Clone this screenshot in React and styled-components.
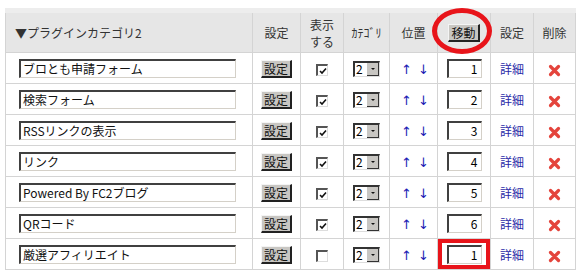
import React from "react";
import styled, { createGlobalStyle } from "styled-components";

const Global = createGlobalStyle`
  body {
    margin: 0;
    background: #fff;
    font-family: "Noto Sans CJK JP", "Liberation Sans", sans-serif;
    font-size: 12px;
    color: #222;
  }
`;

const Wrapper = styled.div`
  padding: 8px 0 0 5px;
`;

const Table = styled.table`
  border-collapse: collapse;
  table-layout: fixed;
  width: 570px;
  border-top: 5px solid #ededed;
`;

const Head = styled.th`
  position: relative;
  background-color: #e6e6e6;
  border: 1px solid #d4d4d4;
  height: 39px;
  padding: 0;
  font-weight: normal;
  font-size: 12px;
  line-height: 17px;
  color: #333;
  text-align: ${(p) => (p.$left ? "left" : "center")};
  padding-left: ${(p) => (p.$left ? "9px" : "0")};
`;

const Cell = styled.td`
  position: relative;
  border: 1px solid #d4d4d4;
  height: 30px;
  padding: 0;
  text-align: ${(p) => (p.$left ? "left" : "center")};
  padding-left: ${(p) => (p.$left ? "13px" : "0")};
`;

const TextBox = styled.div`
  box-sizing: border-box;
  width: 217px;
  height: 19px;
  border-top: 2px solid #404040;
  border-left: 2px solid #404040;
  border-right: 1px solid #d4d0c8;
  border-bottom: 1px solid #d4d0c8;
  background: #fff;
  padding-left: 2px;
  font-size: 12px;
  line-height: 16px;
  color: #111;
  white-space: nowrap;
  overflow: hidden;
`;

const Button = styled.span`
  display: inline-block;
  box-sizing: border-box;
  height: 18px;
  padding: 0 2px;
  background: #c8c6c2;
  border-top: 1px solid #f4f4f4;
  border-left: 1px solid #f4f4f4;
  border-right: 2px solid #222;
  border-bottom: 2px solid #222;
  font-size: 12px;
  line-height: 15px;
  color: #111;
  vertical-align: middle;
`;

const Check = styled.span`
  display: inline-flex;
  align-items: center;
  justify-content: center;
  box-sizing: border-box;
  width: 12px;
  height: 12px;
  border-top: 2px solid #555;
  border-left: 2px solid #555;
  border-right: 1px solid #ddd;
  border-bottom: 1px solid #ddd;
  background: #fff;
  vertical-align: middle;
`;

const Select = styled.span`
  display: inline-flex;
  box-sizing: border-box;
  width: 27px;
  height: 16px;
  border-top: 2px solid #333;
  border-left: 2px solid #333;
  border-right: 1px solid #ddd;
  border-bottom: 1px solid #ddd;
  background: #fff;
  vertical-align: middle;
`;

const SelectValue = styled.span`
  flex: 1;
  font-size: 12px;
  line-height: 12px;
  text-align: left;
  padding-left: 1px;
  color: #000;
`;

const SelectButton = styled.span`
  width: 11px;
  background: #c8c6c2;
  border-right: 1px solid #333;
  border-bottom: 1px solid #333;
  display: flex;
  align-items: center;
  justify-content: center;
  &::after {
    content: "";
    border-left: 2px solid transparent;
    border-right: 2px solid transparent;
    border-top: 2px solid #111;
  }
`;

const Arrows = styled.span`
  display: inline-flex;
  gap: 6px;
  padding-left: 3px;
`;

const Arrow = styled.span`
  color: #1c1cb4;
  font-family: "DejaVu Sans", sans-serif;
  font-size: 13px;
  line-height: 14px;
`;

const NumberBox = styled.div`
  display: inline-block;
  box-sizing: border-box;
  width: 35px;
  height: 19px;
  border-top: 2px solid #404040;
  border-left: 2px solid #404040;
  border-right: 1px solid #d4d0c8;
  border-bottom: 1px solid #d4d0c8;
  background: #fff;
  text-align: right;
  padding-right: 3px;
  font-size: 12px;
  line-height: 16px;
  color: #000;
  vertical-align: middle;
`;

const Link = styled.span`
  color: #2a2aa8;
  font-size: 12px;
`;

const Circle = styled.span`
  position: absolute;
  z-index: 3;
  left: -16px;
  top: -15px;
  width: 50px;
  height: 36px;
  border: 5px solid #e8141a;
  border-radius: 50%;
  pointer-events: none;
`;

const Frame = styled.span`
  position: absolute;
  z-index: 3;
  inset: 0;
  border: 4px solid #e8141a;
  pointer-events: none;
`;

const Cross = () => (
  <svg width="13" height="13" viewBox="0 0 13 13" style={{ verticalAlign: "middle" }}>
    <path d="M2.5 2.5 L10.5 10.5 M10.5 2.5 L2.5 10.5" stroke="#e4443c" strokeWidth="3.2" strokeLinecap="round" />
  </svg>
);

const Tick = () => (
  <svg width="8" height="8" viewBox="0 0 8 8">
    <path d="M1 4 L3 6 L7 1.5" stroke="#111" strokeWidth="1.6" fill="none" />
  </svg>
);

const rows = [
  { name: "ブロとも申請フォーム", order: 1, shown: true },
  { name: "検索フォーム", order: 2, shown: true },
  { name: "RSSリンクの表示", order: 3, shown: true },
  { name: "リンク", order: 4, shown: true },
  { name: "Powered By FC2ブログ", order: 5, shown: true },
  { name: "QRコード", order: 6, shown: true },
  { name: "厳選アフィリエイト", order: 1, shown: false, marked: true },
];

const App = () => {
  return (
    <Wrapper>
      <Global />
      <Table>
        <colgroup>
          <col style={{ width: 247 }} />
          <col style={{ width: 48 }} />
          <col style={{ width: 43 }} />
          <col style={{ width: 46 }} />
          <col style={{ width: 48 }} />
          <col style={{ width: 53 }} />
          <col style={{ width: 43 }} />
          <col style={{ width: 42 }} />
        </colgroup>
        <thead>
          <tr>
            <Head $left>▼プラグインカテゴリ2</Head>
            <Head>設定</Head>
            <Head>
              表示
              <br />
              する
            </Head>
            <Head>ｶﾃｺﾞﾘ</Head>
            <Head>位置</Head>
            <Head>
              <span style={{ position: "relative", display: "inline-block" }}>
                <Button>移動</Button>
                <Circle />
              </span>
            </Head>
            <Head>設定</Head>
            <Head>削除</Head>
          </tr>
        </thead>
        <tbody>
          {rows.map((r, i) => (
            <tr key={i}>
              <Cell $left>
                <TextBox>{r.name}</TextBox>
              </Cell>
              <Cell>
                <Button>設定</Button>
              </Cell>
              <Cell>
                <Check>{r.shown && <Tick />}</Check>
              </Cell>
              <Cell>
                <Select>
                  <SelectValue>2</SelectValue>
                  <SelectButton />
                </Select>
              </Cell>
              <Cell>
                <Arrows>
                  <Arrow>↑</Arrow>
                  <Arrow>↓</Arrow>
                </Arrows>
              </Cell>
              <Cell>
                <NumberBox>{r.order}</NumberBox>
                {r.marked && <Frame />}
              </Cell>
              <Cell>
                <Link>詳細</Link>
              </Cell>
              <Cell>
                <Cross />
              </Cell>
            </tr>
          ))}
        </tbody>
      </Table>
    </Wrapper>
  );
};

export default App;
